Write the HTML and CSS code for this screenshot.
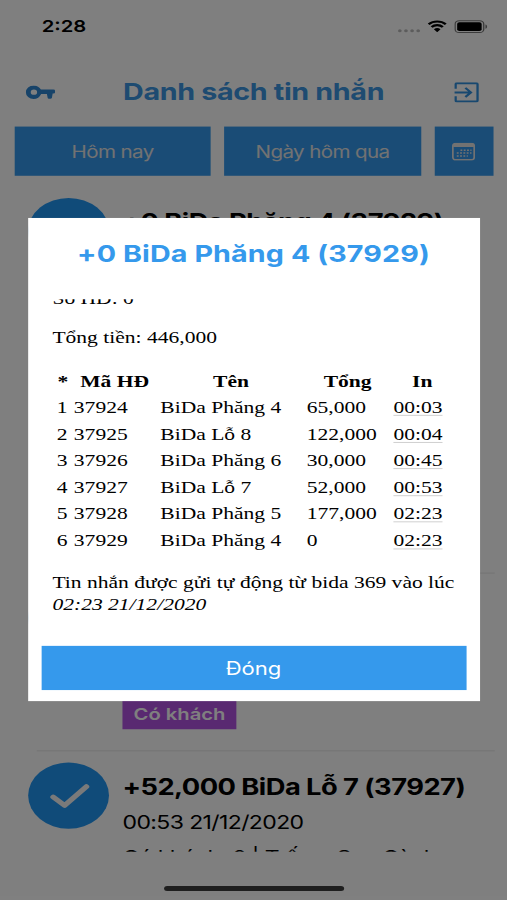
FILE: index.html
```
<!DOCTYPE html>
<html lang="vi">
<head>
    <meta charset="UTF-8">
    <meta name="viewport" content="width=device-width, initial-scale=1.0">
    <title>Danh sách tin nhắn</title>
    <link rel="stylesheet" href="styles.css">
</head>
<body>
    <div class="screen">
        <!-- Status bar -->
        <div class="status-bar">
            <span class="clock">2:28</span>
            <div class="status-icons">
                <div class="signal"><i></i><i></i><i></i><i></i></div>
                <svg class="wifi" viewBox="0 0 16 12">
                    <path d="M1 4.2a10.2 10.2 0 0 1 14 0M3.4 6.9a6.7 6.7 0 0 1 9.2 0" fill="none" stroke="#000" stroke-width="2.2"/>
                    <path d="M8 12 5.3 9.2a3.9 3.9 0 0 1 5.4 0z"/>
                </svg>
                <svg class="battery" viewBox="0 0 28 13">
                    <rect x=".6" y=".6" width="23.4" height="11.8" rx="3.4" fill="none" stroke="#777" stroke-width="1.1"/>
                    <rect x="2.3" y="2.2" width="20" height="8.6" rx="1.8"/>
                    <path d="M25.4 4.4c1.8.6 1.8 3.6 0 4.2z" fill="#777"/>
                </svg>
            </div>
        </div>

        <div class="header">
            <svg class="icon-key" viewBox="0 0 24 14">
                <path fill-rule="evenodd" d="M6.4 0C9.2 0 11.4 1.700 12.400 4.200H22.600Q24 4.200 24 5.600V6.900Q24 8.200 22.600 8.200H22L21.400 12.300Q21.200 13.400 20.100 13.400H18.900Q18 13.400 17.900 12.400L17.300 8.600H12.600C11.600 11.700 9.200 13.600 6.400 13.600A6.300 6.800 0 0 1 6.400 0zM6.700 4.200A2.600 2.600 0 1 0 6.700 9.400A2.600 2.600 0 1 0 6.700 4.200z"/>
            </svg>
            <h1>Danh sách tin nhắn</h1>
            <svg class="icon-exit" viewBox="0 0 20 20">
                <path d="M1 6.300V2Q1 1 2 1H18Q19 1 19 2V18Q19 19 18 19H2Q1 19 1 18V13.700M0 10H13M9 5.500 13.500 10 9 14.500"/>
            </svg>
        </div>

        <div class="filters">
            <button class="btn"><span>Hôm nay</span></button>
            <button class="btn"><span>Ngày hôm qua</span></button>
            <button class="btn btn-calendar">
                <svg viewBox="0 0 19 18">
                    <rect x=".8" y=".8" width="17.400" height="16.300" rx="2.200" fill="none" stroke="#e4e4e4" stroke-width="1.400"/>
                    <path d="M1 2.500Q1 .8 3 .8H16Q18 .8 18 2.500V4.300H1z" fill="#e4e4e4"/>
                    <path d="M7 7.600H16M4 10.400H16M4 13.200H13" stroke="#e4e4e4" stroke-width="1.500" stroke-dasharray="1.500 1.200"/>
                </svg>
            </button>
        </div>

        <!-- Message list -->
        <div class="list">
            <div class="item item-long">
                <div class="avatar">
                    <svg viewBox="0 0 32 24"><path d="M3 13 12 21 29 3"/></svg>
                </div>
                <div class="item-body">
                    <h2>+0 BiDa Phăng 4 (37929)</h2>
                    <p>02:23 21/12/2020</p>
                </div>
            </div>
            <div class="item">
                <div class="avatar">
                    <svg viewBox="0 0 32 24"><path d="M3 13 12 21 29 3"/></svg>
                </div>
                <div class="item-body">
                    <h2>+177,000 BiDa Phăng 5</h2>
                    <p>02:23 21/12/2020</p>
                    <span class="tag">Có khách</span>
                </div>
            </div>
            <div class="item">
                <div class="avatar">
                    <svg viewBox="0 0 32 24"><path d="M3 13 12 21 29 3"/></svg>
                </div>
                <div class="item-body">
                    <h2>+52,000 BiDa Lỗ 7 (37927)</h2>
                    <p>00:53 21/12/2020</p>
                    <p class="detail">Có khách: 2 | Trống: Sao Cành</p>
                </div>
            </div>
        </div>

        <!-- Popup -->
        <div class="overlay">
            <div class="modal">
                <h2 class="modal-title">+0 BiDa Phăng 4 (37929)</h2>
                <div class="content">
                    <p class="bill-no">Số HĐ: 0</p>
                    <p class="total">Tổng tiền: 446,000</p>
                    <table>
                        <colgroup>
                            <col class="c-no"><col class="c-code"><col class="c-name"><col class="c-sum"><col class="c-time">
                        </colgroup>
                        <tr><th>*</th><th>Mã HĐ</th><th>Tên</th><th>Tổng</th><th>In</th></tr>
                        <tr><td>1</td><td>37924</td><td>BiDa Phăng 4</td><td>65,000</td><td><u>00:03</u></td></tr>
                        <tr><td>2</td><td>37925</td><td>BiDa Lỗ 8</td><td>122,000</td><td><u>00:04</u></td></tr>
                        <tr><td>3</td><td>37926</td><td>BiDa Phăng 6</td><td>30,000</td><td><u>00:45</u></td></tr>
                        <tr><td>4</td><td>37927</td><td>BiDa Lỗ 7</td><td>52,000</td><td><u>00:53</u></td></tr>
                        <tr><td>5</td><td>37928</td><td>BiDa Phăng 5</td><td>177,000</td><td><u>02:23</u></td></tr>
                        <tr><td>6</td><td>37929</td><td>BiDa Phăng 4</td><td>0</td><td><u>02:23</u></td></tr>
                    </table>
                    <p class="note">Tin nhắn được gửi tự động từ bida 369 vào lúc<br><i>02:23 21/12/2020</i></p>
                </div>
                <button class="btn btn-close"><span>Đóng</span></button>
            </div>
        </div>
        <div class="home-bar"></div>
    </div>
</body>
</html>
```
FILE: styles.css
```
* {
    box-sizing: border-box;
}

body {
    margin: 0;
    overflow: hidden;
    background: #808080;
}

h1, h2, p {
    margin: 0;
    white-space: nowrap;
}

/* 414 x 896 phone screen stretched to fill the window */
.screen {
    position: relative;
    display: flex;
    flex-direction: column;
    width: 414px;
    height: 896px;
    background: #fff;
    font-family: Inter, "Liberation Sans", sans-serif;
    color: #000;
    transform: scale(1.22464, 1.00446);
    transform-origin: 0 0;
}

.status-bar {
    display: flex;
    justify-content: space-between;
    height: 56px;
    padding: 16px 15px 0 34px;
}

.clock {
    font-size: 16.5px;
    font-weight: 600;
    line-height: 20px;
}

.status-icons {
    display: flex;
    align-items: center;
    gap: 6px;
    height: 20px;
}

.signal {
    display: flex;
    gap: 2px;
    padding-top: 8px;
}

.signal i {
    width: 3px;
    height: 3px;
    border-radius: 50%;
    background: #b8b8b8;
}

.wifi {
    width: 16px;
    height: 12px;
}

.battery {
    width: 28px;
    height: 13px;
}

.header {
    display: flex;
    align-items: center;
    justify-content: space-between;
    height: 70px;
    padding: 1px 23px 0 21.2px;
}

.header h1 {
    margin-right: 2px;
    color: #3c96e2;
    font-size: 23.4px;
    font-weight: 700;
    line-height: 30px;
    letter-spacing: -0.26px;
}

.icon-key {
    width: 24px;
    height: 14px;
    fill: #2f87d2;
}

.icon-exit {
    width: 20px;
    height: 20px;
    fill: none;
    stroke: #3190df;
    stroke-width: 2;
}

.filters {
    display: flex;
    gap: 11px;
    padding: 0 11px 0 11.7px;
}

.btn {
    display: flex;
    flex: 1;
    align-items: center;
    justify-content: center;
    height: 49px;
    padding: 0;
    border: 0;
    background: #3599ec;
    color: #fff;
    font-family: inherit;
    font-size: 18px;
}

.filters .btn {
    font-size: 16.8px;
    letter-spacing: -0.5px;
}

.filters .btn span {
    color: #e4e4e4;
}

.filters .btn-calendar {
    flex: 0 0 48.4px;
}

.btn-calendar svg {
    width: 19px;
    height: 18px;
}

.list {
    flex: none;
    height: 673px;
    padding: 11px 10px 0 22.9px;
    overflow: hidden;
}

.item {
    position: relative;
    display: flex;
    gap: 11.2px;
    height: 177px;
    padding: 11px 0 22px;
}

.item-long {
    height: 385px;
}

.item::after {
    position: absolute;
    right: 0;
    bottom: 0;
    left: 7px;
    height: 1px;
    background: #e6e6e6;
    content: "";
}

.avatar {
    display: flex;
    flex: none;
    align-items: center;
    justify-content: center;
    width: 66px;
    height: 66px;
    border-radius: 50%;
    background: #2196f3;
}

.avatar svg {
    width: 34px;
    height: 25px;
    margin-left: 3px;
    fill: none;
    stroke: #f4f4f4;
    stroke-width: 4.5;
    stroke-linecap: round;
    stroke-linejoin: round;
}

.item-body {
    display: flex;
    flex-direction: column;
    align-items: flex-start;
    padding-top: 9px;
}

.item-body h2 {
    font-size: 22.3px;
    font-weight: 700;
    line-height: 30px;
    letter-spacing: -0.45px;
}

.item-body p {
    margin-top: 8px;
    font-size: 18.8px;
    line-height: 26px;
    letter-spacing: -0.5px;
}

.item-body .detail {
    margin-top: 9px;
}

.tag {
    margin-top: auto;
    padding: 0 9px;
    background: #b252e2;
    color: #fff;
    font-size: 16.5px;
    font-weight: 600;
    line-height: 29px;
}

.overlay {
    position: absolute;
    inset: 0;
    display: flex;
    flex-direction: column;
    align-items: center;
    padding-top: 217px;
    background: rgba(0, 0, 0, 0.5);
}

.modal {
    display: flex;
    flex-direction: column;
    width: 369px;
    height: 481px;
    padding: 0 11px 11px;
    background: #fff;
}

.modal-title {
    height: 81px;
    padding-top: 21px;
    color: #3599ec;
    font-size: 23.4px;
    font-weight: 700;
    line-height: 30px;
    letter-spacing: 0.1px;
    text-align: center;
}

.content {
    flex: 1;
    padding-left: 9.3px;
    overflow: hidden;
    font-family: "Liberation Serif", serif;
    font-size: 17.6px;
    line-height: 22px;
}

/* the message is scrolled, only the bottom of this line shows */
.bill-no {
    margin-top: -12px;
}

.total {
    margin-top: 16px;
}

table {
    width: 328px;
    margin: 18.4px 0 0 0.5px;
    border-spacing: 2px;
    table-layout: fixed;
}

th, td {
    height: 24.5px;
    padding: 0 1px;
    white-space: nowrap;
}

.c-no {
    width: 12px;
}

.c-code {
    width: 68.6px;
}

.c-name {
    width: 117.5px;
}

.c-sum {
    width: 68.8px;
}

.c-time {
    width: 49px;
}

td u {
    text-decoration-color: #d0d0d0;
    text-decoration-thickness: 1px;
    text-underline-offset: 2px;
}

.note {
    margin-top: 16.6px;
}

.btn-close {
    flex: none;
    height: 44.5px;
    padding-top: 1px;
}

.home-bar {
    position: absolute;
    bottom: 9px;
    left: 134px;
    width: 147px;
    height: 5px;
    border-radius: 3px;
    background: #1e1e1e;
}
```
